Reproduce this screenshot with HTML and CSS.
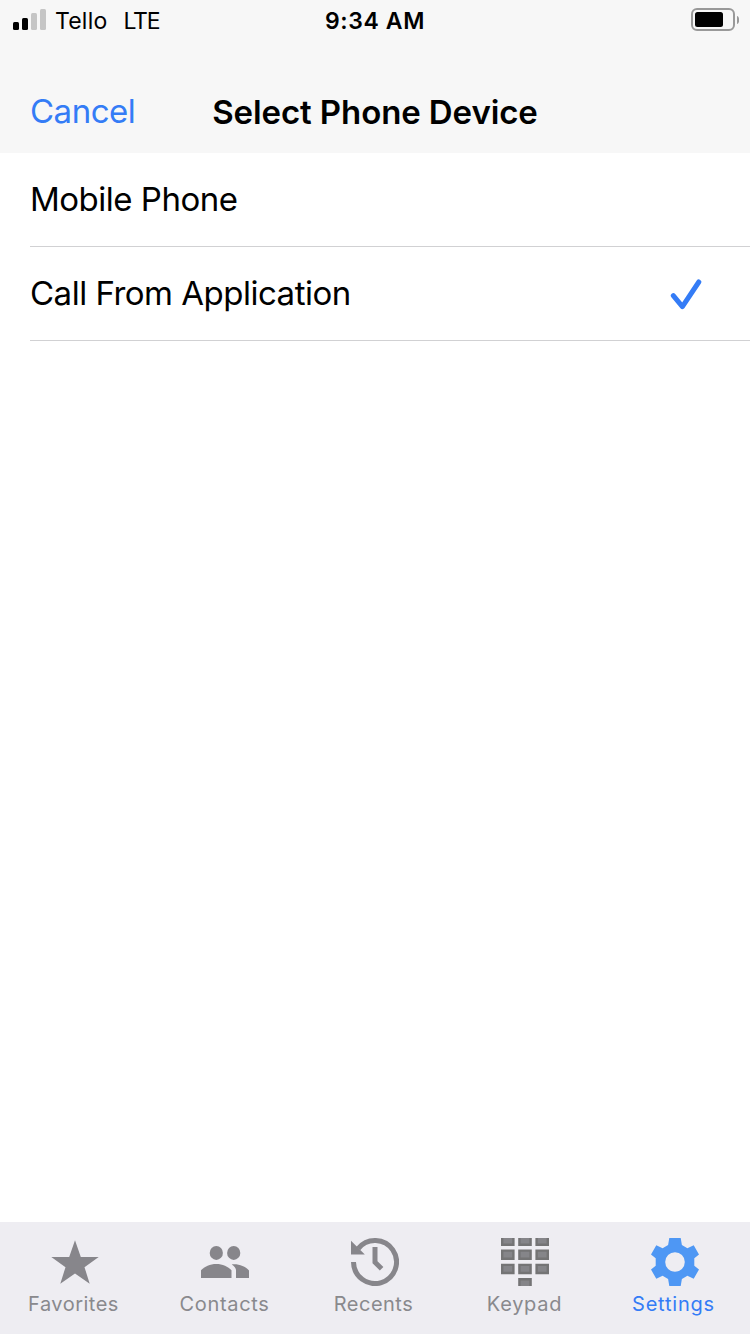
FILE: index.html
```html
<!DOCTYPE html>
<html lang="en">

<head>
    <meta charset="UTF-8">
    <meta name="viewport" content="width=device-width, initial-scale=1.0">
    <title>Select Phone Device</title>
    <link rel="stylesheet" href="styles.css">
</head>

<body>
    <div class="screen">
        <header class="header">
            <div class="status-bar">
                <div class="status-left">
                    <svg class="signal" width="34" height="22" viewBox="0 0 34 22">
                        <rect x="0" y="13" width="6" height="8" rx="1.5" />
                        <rect x="9" y="9" width="6" height="12" rx="1.5" />
                        <rect class="signal-off" x="18" y="4" width="6" height="17" rx="1.5" />
                        <rect class="signal-off" x="27" y="0" width="6" height="21" rx="1.5" />
                    </svg>
                    <span class="carrier">Tello</span>
                    <span class="network">LTE</span>
                </div>
                <span class="time">9:34 AM</span>
                <svg class="battery" width="48" height="24" viewBox="0 0 48 24">
                    <rect class="battery-case" x="1" y="1" width="42" height="21" rx="5" />
                    <rect x="4" y="4" width="28" height="15" rx="2.5" />
                    <path class="battery-tip" d="M46 8c3 1 3 7 0 8z" />
                </svg>
            </div>
            <div class="nav-bar">
                <a class="cancel">Cancel</a>
                <h1>Select Phone Device</h1>
            </div>
        </header>

        <main class="device-list">
            <div class="device">
                <span>Mobile Phone</span>
            </div>
            <div class="device">
                <span>Call From Application</span>
                <svg class="check" width="32" height="32" viewBox="0 0 32 32">
                    <path d="M3.3 17.6L12.4 28.6L28.8 4" />
                </svg>
            </div>
        </main>

        <nav class="tab-bar">
            <a class="tab">
                <svg class="tab-icon" viewBox="0 0 48 48">
                    <path d="M24 2.3L29.8 19H47.7L33.5 29.2L38.7 45.7L24 35.6L9.3 45.7L14.5 29.2L.3 19H18.2z" />
                </svg>
                <span class="label">Favorites</span>
            </a>
            <a class="tab">
                <svg class="tab-icon" viewBox="0 0 48 48">
                    <ellipse cx="15.3" cy="14.9" rx="6.6" ry="7" />
                    <ellipse cx="32.7" cy="14.9" rx="6.6" ry="7" />
                    <path d="M0 40V32.3C3.5 28.6 9 26 15.3 26S27 28.6 30.5 32.3V40z" />
                    <path d="M30.7 26.4C38 25.7 43.9 28.3 48 32.4V40H35V32C35 30 33.3 28.2 30.7 26.4z" />
                </svg>
                <span class="label contacts">Contacts</span>
            </a>
            <a class="tab">
                <svg class="tab-icon" viewBox="0 0 48 48">
                    <path class="clock-line" d="M2.5 24A21.5 21.5 0 1 0 7.2 10.6" />
                    <path d="M0 2.7L13.8 16.6H0z" />
                    <path class="clock-line" d="M24 9V24.2L30.6 30.8" />
                </svg>
                <span class="label">Recents</span>
            </a>
            <a class="tab">
                <svg class="tab-icon keypad-icon" viewBox="0 0 48 48">
                    <path d="M1.2 -2H12.4V6.8H1.2zM18.4 -2H29.6V6.8H18.4zM35.6 -2H46.8V6.8H35.6z" />
                    <path d="M1.2 12.6H12.4V20.7H1.2zM18.4 12.6H29.6V20.7H18.4zM35.6 12.6H46.8V20.7H35.6z" />
                    <path d="M1.2 26.9H12.4V35H1.2zM18.4 26.9H29.6V35H18.4zM35.6 26.9H46.8V35H35.6z" />
                    <path d="M18.4 41.2H29.6V51H18.4z" />
                </svg>
                <span class="label keypad">Keypad</span>
            </a>
            <a class="tab active">
                <svg class="tab-icon" viewBox="0 0 48 48">
                    <path fill-rule="evenodd" d="M18.3 0H29.7L30.9 7L36.4 10.2L42.7 7.3L48 16.5L43.3 20.2V27.8L48 31.5L42.7 40.7L36.4 37.8L30.9 41L29.7 48H18.3L17.1 41L11.6 37.8L5.3 40.7L0 31.5L4.7 27.8V20.2L0 16.5L5.3 7.3L11.6 10.2L17.1 7zM24 14.2A9.8 9.8 0 1 0 24 33.8A9.8 9.8 0 1 0 24 14.2z" />
                </svg>
                <span class="label settings">Settings</span>
            </a>
        </nav>
    </div>
</body>

</html>
```
FILE: styles.css
```css
* {
    box-sizing: border-box;
}

body {
    margin: 0;
    font-family: Inter, "Liberation Sans", sans-serif;
    color: #000;
    background: #fff;
}

.screen {
    display: flex;
    flex-direction: column;
    width: 750px;
    height: 1334px;
}

.header {
    height: 153px;
    background: #f7f7f7;
}

.status-bar {
    display: grid;
    grid-template-columns: 1fr auto 1fr;
    align-items: center;
    height: 40px;
    padding: 0 11px 0 13px;
    font-size: 23px;
}

.status-left {
    display: flex;
    align-items: center;
}

.signal-off {
    fill: #c5c5c5;
}

.carrier,
.network,
.time {
    padding-top: 2px;
}

.carrier {
    margin-left: 8px;
    letter-spacing: 0.2px;
}

.network {
    margin-left: 16px;
    letter-spacing: -1.2px;
}

.time {
    margin-right: 2px;
    font-weight: 600;
    letter-spacing: 0.6px;
}

.battery {
    justify-self: end;
}

.battery-case {
    fill: none;
    stroke: #999;
    stroke-width: 2;
}

.battery-tip {
    fill: #999;
}

.nav-bar {
    display: grid;
    grid-template-columns: 1fr auto 1fr;
    align-items: center;
    height: 88px;
    margin-top: 28px;
    padding: 0 30px;
}

.cancel {
    padding-bottom: 2px;
    font-size: 33px;
    letter-spacing: -0.5px;
    color: #347cf6;
}

h1 {
    margin: 0;
    font-size: 33px;
    font-weight: 600;
    letter-spacing: -0.1px;
}

.device-list {
    flex: 1;
}

.device {
    display: flex;
    align-items: center;
    justify-content: space-between;
    height: 94px;
    margin-left: 30px;
    padding-right: 48px;
    border-bottom: 1px solid #d1d1d3;
    font-size: 33px;
    letter-spacing: -0.5px;
}

.device span {
    padding-bottom: 1px;
}

.check {
    fill: none;
    stroke: #347cf6;
    stroke-width: 5;
    stroke-linecap: round;
    stroke-linejoin: round;
}

.tab-bar {
    display: grid;
    grid-template-columns: repeat(5, 1fr);
    height: 112px;
    background: #eeedf2;
}

.tab {
    display: flex;
    flex-direction: column;
    align-items: center;
    padding-top: 16px;
    color: #89898d;
}

.tab-icon {
    width: 48px;
    height: 48px;
    fill: #87868b;
}

.clock-line {
    fill: none;
    stroke: #87868b;
    stroke-width: 5;
}

.keypad-icon {
    fill: #858589;
    stroke: #747475;
    stroke-width: 2.4;
}

.label {
    margin-top: 5px;
    padding-right: 3px;
    font-size: 20px;
    line-height: 26px;
    letter-spacing: 0.5px;
}

.contacts,
.keypad {
    padding-right: 1px;
    letter-spacing: 0.7px;
}

.settings {
    letter-spacing: 0.8px;
}

.active {
    color: #347cf6;
}

.active .tab-icon {
    fill: #4e97f4;
}
```
